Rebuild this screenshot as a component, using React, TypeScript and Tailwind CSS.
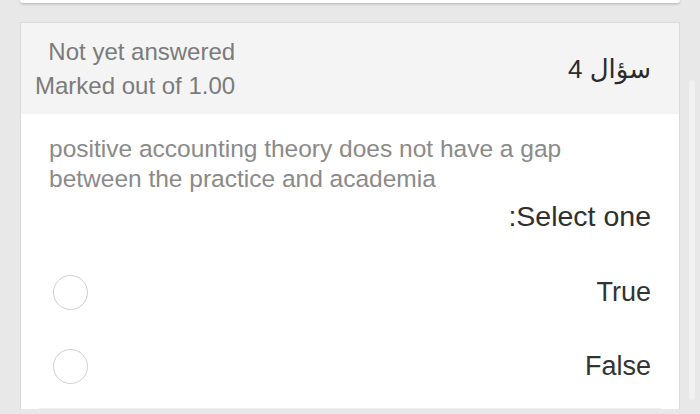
import React, { useState } from 'react';

const options = ['True', 'False'];

const Radio: React.FC<{ checked: boolean }> = ({ checked }) => (
    <span className="flex h-[35px] w-[35px] items-center justify-center rounded-full border-[1.5px] border-[#cfcfcf] bg-white">
        {checked && <span className="h-[15px] w-[15px] rounded-full bg-[#4a90e2]" />}
    </span>
);

export default function App() {
    const [answer, setAnswer] = useState<string | null>(null);

    return (
        <div
            className="relative h-[414px] w-[700px] overflow-hidden bg-[#e8e8e8]"
            style={{ fontFamily: '"Liberation Sans", "DejaVu Sans", Arial, sans-serif' }}
        >
            {/* previous question card, mostly scrolled off */}
            <div className="mx-[20px] h-[3px] rounded-b-[4px] bg-white shadow-[0_1px_3px_rgba(0,0,0,0.25)]" />

            <div className="mx-[20px] mt-[19px] w-[660px] border-x border-t border-[#dadada] bg-white">
                <div className="flex items-center justify-between bg-[#f4f4f4] pb-[11px] pl-[14px] pr-[28px] pt-[12px]">
                    <div className="text-right text-[24px] leading-[34px] text-[#7b7b7b]">
                        <div>Not yet answered</div>
                        <div>Marked out of 1.00</div>
                    </div>
                    <div dir="rtl" className="text-[26px] leading-[34px] text-[#2b2b2b]">سؤال 4</div>
                </div>

                <div className="px-[28px] pt-[20px]">
                    <p className="text-[24.5px] leading-[30px] text-[#8a8a8a]">
                        positive accounting theory does not have a gap
                        <br />
                        between the practice and academia
                    </p>
                    <p className="mt-[5px] text-right text-[28.5px] leading-[34px] text-[#2f2f2f]">:Select one</p>

                    <div className="mt-[22px]">
                        {options.map(opt => (
                            <label
                                key={opt}
                                onClick={() => setAnswer(opt)}
                                className="flex h-[74px] cursor-pointer items-center justify-between pl-[4px]"
                            >
                                <Radio checked={answer === opt} />
                                <span className="text-[27px] text-[#333333]">{opt}</span>
                            </label>
                        ))}
                    </div>
                </div>
                <div className="mx-[18px] mt-[5px] h-px bg-[#f0f0f0]" />
            </div>

            {/* scrollbar thumb */}
            <div className="absolute right-[5px] top-[80px] h-[320px] w-[6px] rounded-full bg-[#f1f1f1]" />
        </div>
    );
}
